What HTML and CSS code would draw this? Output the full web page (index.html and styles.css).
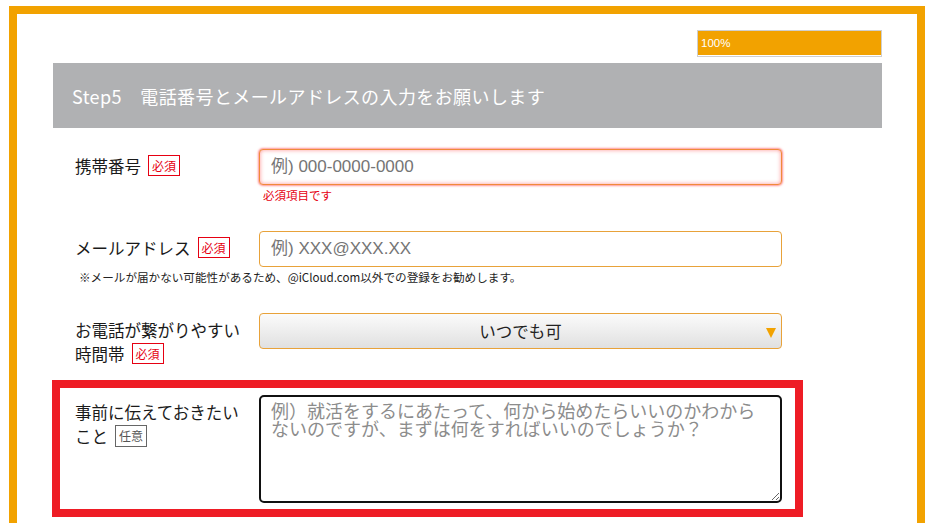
FILE: index.html
```html
<!DOCTYPE html>
<html lang="ja">
<head>
<meta charset="utf-8">
<title>Step5</title>
<link rel="stylesheet" href="styles.css">
</head>
<body>
<div class="frame">
  <div class="progress"><div class="bar" style="width:100%">100%</div></div>
  <h2 class="step">Step5　電話番号とメールアドレスの入力をお願いします</h2>

  <div class="row row-tel">
    <div class="label">携帯番号<span class="badge req">必須</span></div>
    <div class="field">
      <input class="text error" type="text" placeholder="例) 000-0000-0000">
      <p class="err">必須項目です</p>
    </div>
  </div>

  <div class="row row-mail">
    <div class="label">メールアドレス<span class="badge req">必須</span></div>
    <div class="field">
      <input class="text" type="text" placeholder="例) XXX@XXX.XX">
    </div>
  </div>
  <p class="note">※メールが届かない可能性があるため、@iCloud.com以外での登録をお勧めします。</p>

  <div class="row row-time">
    <div class="label"><span>お電話が繋がりやすい</span><span>時間帯</span><span class="badge req">必須</span></div>
    <div class="field">
      <div class="select"><span>いつでも可</span><i class="arrow"></i></div>
    </div>
  </div>

  <div class="row row-memo">
    <div class="label"><span>事前に伝えておきたい</span><span>こと</span><span class="badge opt">任意</span></div>
    <div class="field">
      <textarea class="memo" placeholder="例）就活をするにあたって、何から始めたらいいのかわからないのですが、まずは何をすればいいのでしょうか？"></textarea>
    </div>
  </div>
</div>
</body>
</html>
```

FILE: styles.css
```css
* { box-sizing: border-box; }
html, body { margin: 0; padding: 0; background: #fff; }
body {
  font-family: "Noto Sans CJK JP", "Noto Sans", sans-serif;
  color: #1a1a1a;
}
.frame {
  margin: 6px 0 0 9px;
  width: 916px;
  border: 8px solid #f2a200;
  border-bottom-width: 0;
  padding: 16px 35px 6px 36px;
}
.progress {
  margin-left: auto;
  width: 185px;
  height: 27px;
  border: 1px solid #cfcfcf;
  background: #fff;
}
.bar {
  height: 24px;
  background: #f2a200;
  color: #fff;
  font-family: "Liberation Sans", "Noto Sans", sans-serif;
  font-size: 11.5px;
  line-height: 24px;
  padding-left: 3px;
}
.step {
  margin: 6px 0 0;
  height: 65px;
  background: #b0b1b3;
  color: #fff;
  font-weight: normal;
  font-size: 18px;
  letter-spacing: 0.4px;
  display: flex;
  align-items: center;
  padding-left: 19px;
}
.row {
  display: flex;
  padding-left: 22px;
}
.label {
  width: 172px;
  margin-right: 12px;
  padding-top: 5px;
  font-size: 16.5px;
  line-height: 24px;
  color: #1a1a1a;
}
.field { width: 523px; }
.badge {
  display: inline-block;
  vertical-align: top;
  margin-left: 7px;
  margin-top: 1px;
  height: 21px;
  padding: 0 3px;
  font-size: 12px;
  line-height: 19px;
  letter-spacing: 0;
  border: 1px solid;
}
.req { color: #e60012; border-color: #e60012; }
.opt { color: #555; border-color: #666; height: 22px; line-height: 20px; }
.text {
  display: block;
  width: 523px;
  height: 36px;
  border: 1px solid #e8a23a;
  border-radius: 4px;
  padding: 0 11px;
  font-family: "Liberation Sans", "Noto Sans CJK JP", sans-serif;
  font-size: 17px;
  color: #333;
  background: #fff;
  outline: none;
}
.text::placeholder { color: #757575; }
.text.error {
  border-color: #f08a3a;
  box-shadow: 0 0 2px 1px rgba(255, 60, 60, 0.55), inset 0 0 4px rgba(255, 60, 60, 0.55);
}
.err {
  margin: 1px 0 0 4px;
  font-size: 11.5px;
  line-height: 18px;
  color: #e60012;
}
.row-tel { margin-top: 21px; }
.row-mail { margin-top: 27px; }
.note {
  margin: 2px 0 0;
  padding-left: 26px;
  font-size: 11.6px;
  line-height: 16px;
  color: #222;
}
.row-time { margin-top: 28px; }
.select {
  position: relative;
  height: 36px;
  border: 1px solid #e8a23a;
  border-radius: 4px;
  background: linear-gradient(#fbfbfb, #e0e0e0);
  display: flex;
  align-items: center;
  justify-content: center;
  font-size: 16.5px;
  color: #222;
}
.arrow {
  position: absolute;
  right: 5px;
  top: 14px;
  width: 0;
  height: 0;
  border-left: 5.5px solid transparent;
  border-right: 5.5px solid transparent;
  border-top: 10px solid #f2a200;
}
.row-memo {
  margin-top: 14px;
  margin-left: -1px;
  width: 751px;
  border: 8px solid #ee1c25;
  padding: 7px 13px 6px 15px;
}
.memo {
  display: block;
  width: 523px;
  height: 108px;
  border: 2px solid #111;
  border-radius: 5px;
  padding: 4px 14px 4px 10px;
  font-family: "Noto Sans CJK JP", sans-serif;
  font-size: 18px;
  line-height: 18px;
  color: #333;
  background: #fff;
  outline: none;
  resize: both;
}
.memo::placeholder { color: #8c8c8c; }
```
